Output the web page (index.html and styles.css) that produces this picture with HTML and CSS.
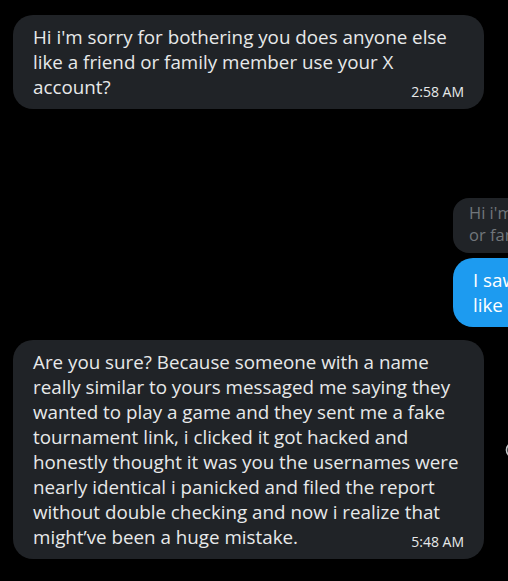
FILE: index.html
```html
<!DOCTYPE html>
<html lang="en">
<head>
    <meta charset="UTF-8">
    <meta name="viewport" content="width=device-width, initial-scale=1.0">
    <title>Messages</title>
    <link rel="stylesheet" href="styles.css">
</head>
<body>
    <div class="chat">
        <div class="row">
            <div class="bubble">
                Hi i'm sorry for bothering you does anyone else like a friend or family member use your X account?<span class="time">2:58 AM</span>
            </div>
        </div>

        <div class="sent-group">
            <div class="reply-preview">
                Hi i'm sorry for bothering you does anyone else<br>
                or family member use your X account?
            </div>
            <div class="bubble sent">
                I saw your message, nobody else<br>
                like that uses my account
            </div>
        </div>

        <div class="row">
            <div class="bubble">
                Are you sure? Because someone with a name really similar to yours messaged me saying they wanted to play a game and they sent me a fake tournament link, i clicked it got hacked and honestly thought it was you the usernames were nearly identical i panicked and filed the report without double checking and now i realize that might’ve been a huge mistake.<span class="time">5:48 AM</span>
            </div>
            <button class="react-btn" aria-label="Add reaction">
                <svg viewBox="0 0 24 24" width="20" height="20">
                    <circle cx="12" cy="12" r="9" fill="none" stroke="#c4c7ca" stroke-width="2"/>
                    <circle cx="9" cy="10" r="1.2" fill="#c4c7ca"/>
                    <circle cx="15" cy="10" r="1.2" fill="#c4c7ca"/>
                    <path d="M8 14.5c1 1.5 2.4 2.2 4 2.2s3-.7 4-2.2" fill="none" stroke="#c4c7ca" stroke-width="1.8"/>
                </svg>
            </button>
        </div>
    </div>
</body>
</html>
```

FILE: styles.css
```css
html, body {
    margin: 0;
    padding: 0;
    background-color: #000;
    overflow: hidden;
}
body {
    font-family: "Open Sans", "Noto Sans", Arial, sans-serif;
    color: #e7e9ea;
}
.chat {
    display: flex;
    flex-direction: column;
    width: 900px;
    padding: 15px 0 0 13px;
}
.row {
    display: flex;
    align-items: center;
    gap: 20px;
}
.bubble {
    width: 471px;
    box-sizing: border-box;
    background-color: #202327;
    border-radius: 20px;
    padding: 10px 20px 9px;
    font-size: 18.8px;
    line-height: 25px;
}
.time {
    float: right;
    font-size: 14px;
    line-height: 16px;
    margin-top: 9px;
}
.sent-group {
    display: flex;
    flex-direction: column;
    gap: 5px;
    margin: 89px 0 13px 440px;
}
.reply-preview {
    width: 380px;
    background-color: #202327;
    border-radius: 16px;
    padding: 4px 16px 7px;
    color: #71767b;
    font-size: 16.5px;
    line-height: 22px;
    white-space: nowrap;
}
.bubble.sent {
    width: 400px;
    background-color: #1d9bf0;
    color: #fff;
    white-space: nowrap;
}
.react-btn {
    background: none;
    border: none;
    padding: 0;
    width: 20px;
    height: 20px;
}
.react-btn svg {
    display: block;
}
```
